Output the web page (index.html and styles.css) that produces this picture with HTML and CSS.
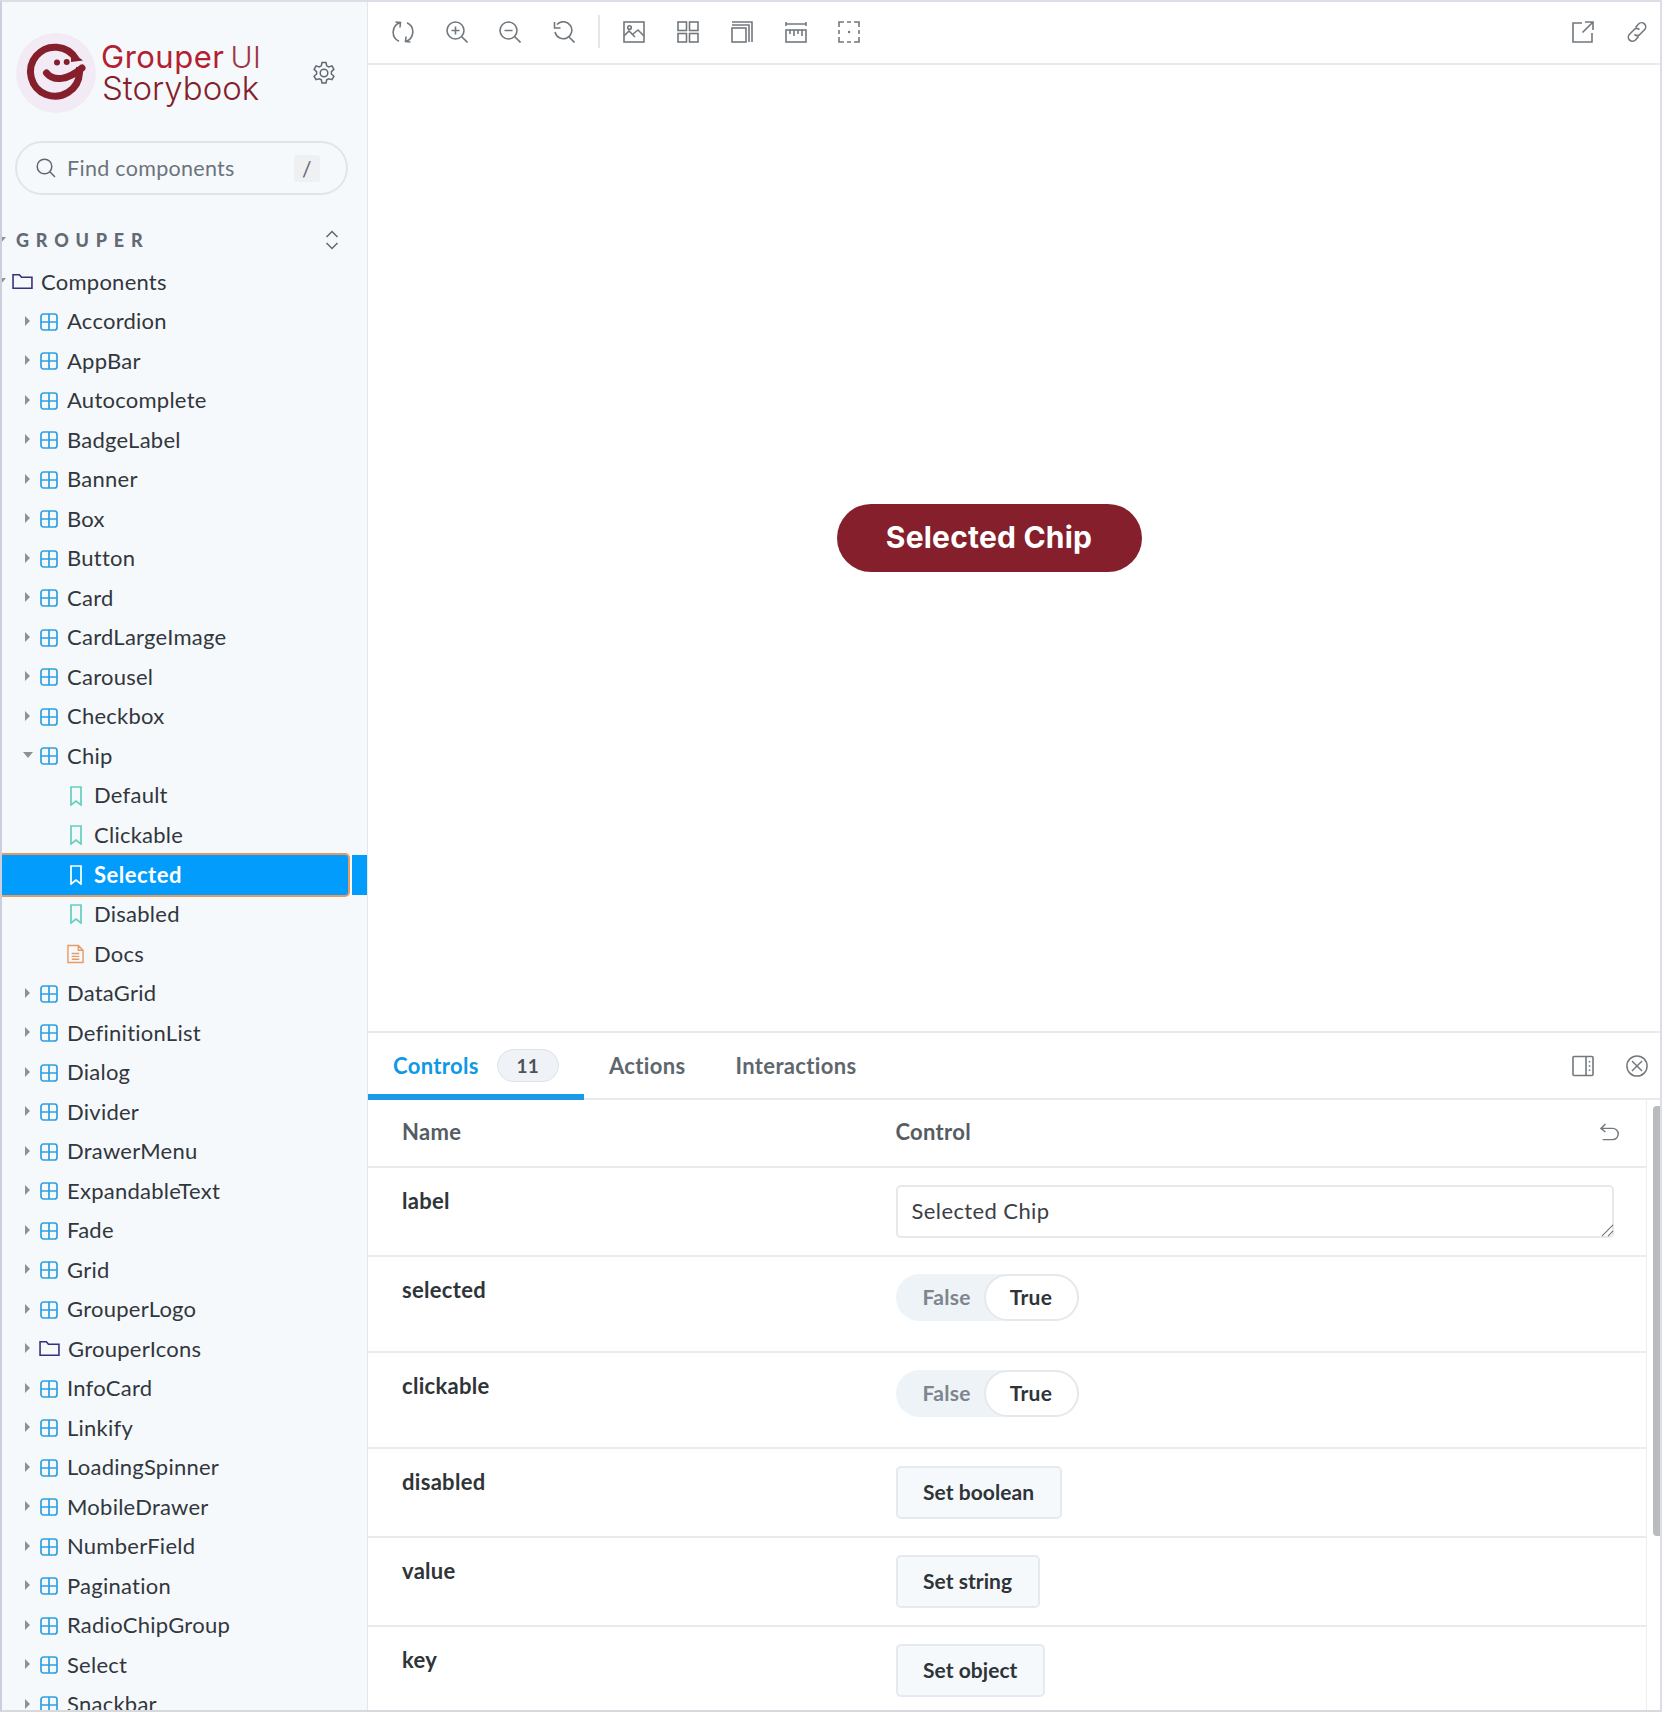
FILE: index.html
```html
<!DOCTYPE html>
<html lang="en">
<head>
<meta charset="utf-8">
<title>Grouper UI Storybook</title>
<link rel="stylesheet" href="styles.css">
</head>
<body>
<svg class="defs" width="0" height="0" aria-hidden="true">
  <symbol id="i-component" viewBox="0 0 18 18"><rect x="1" y="1" width="16" height="16" rx="2.5"/><path d="M9 1v16M1 9h16"/></symbol>
  <symbol id="i-folder" viewBox="0 0 20 16"><path d="M1 14.5V1.5h6l2 2.5h10v10.5z"/></symbol>
  <symbol id="i-bookmark" viewBox="0 0 12 20"><path d="M1 1h10v18l-5-4-5 4z"/></symbol>
  <symbol id="i-doc" viewBox="0 0 18 20"><path d="M1 1h11l5 5v13H1zM12 1v5h5M5 9.500h8M5 12.500h8M5 15.500h8"/></symbol>
  <symbol id="i-reload" viewBox="0 0 22 22"><path d="M8.500 1.500A10 10 0 0 0 7 20.200M13.500 20.500A10 10 0 0 0 15 1.800M3.500 1l5 .5-.5 5M18.500 21l-5-.5.5-5"/></symbol>
  <symbol id="i-zoomin" viewBox="0 0 22 22"><circle cx="9.500" cy="9.500" r="8.500"/><path d="m15.500 15.500 6 6M9.500 5.500v8M5.500 9.500h8"/></symbol>
  <symbol id="i-zoomout" viewBox="0 0 22 22"><circle cx="9.500" cy="9.500" r="8.500"/><path d="m15.500 15.500 6 6M5.500 9.500h8"/></symbol>
  <symbol id="i-zoomreset" viewBox="0 0 22 22"><path d="M4 3.500A8.500 8.500 0 1 1 2 11M1.500 1v6h6M15.500 15.500l6 6"/></symbol>
  <symbol id="i-photo" viewBox="0 0 22 22"><rect x="1" y="1" width="20" height="20"/><circle cx="6.500" cy="6.500" r="1.800"/><path d="m1 15 5-5 6 6M10 13l5-4 6 6"/></symbol>
  <symbol id="i-grid" viewBox="0 0 22 22"><rect x="1" y="1" width="8.500" height="8.500"/><rect x="12.500" y="1" width="8.500" height="8.500"/><rect x="1" y="12.500" width="8.500" height="8.500"/><rect x="12.500" y="12.500" width="8.500" height="8.500"/></symbol>
  <symbol id="i-outline" viewBox="0 0 22 22"><rect x="1" y="7" width="14" height="14"/><path d="M1 4h17v17M1 1h20v20"/></symbol>
  <symbol id="i-ruler" viewBox="0 0 22 22"><path d="M1 1v4M21 1v4M1 3h20"/><rect x="1" y="9" width="20" height="12"/><path d="M5 9v4M9 9v6M13 9v4M17 9v6"/></symbol>
  <symbol id="i-dashed" viewBox="0 0 22 22"><path d="M1 6V1h5M16 1h5v5M21 16v5h-5M6 21H1v-5M9 1h4M9 21h4M1 9v4M21 9v4" /><circle class="solid" cx="11" cy="11" r="1.200"/></symbol>
  <symbol id="i-share" viewBox="0 0 22 22"><path d="M10 2H1v19h19v-9M13 1h8v8M21 1 10.500 11.500"/></symbol>
  <symbol id="i-link" viewBox="0 0 22 22"><path d="m9.500 6.500 3-3.500a4 4 0 0 1 6 5.800l-4.500 4.500a4 4 0 0 1-5.500 0M12.500 15.500l-3 3.500a4 4 0 0 1-6-5.800L8 8.700a4 4 0 0 1 5.500 0"/></symbol>
  <symbol id="i-panel" viewBox="0 0 22 22"><rect x="1" y="1.500" width="20" height="19" rx="1"/><path d="M14 1.500v19M17.500 6v1.500M17.500 10.200v1.500M17.500 14.400v1.500"/></symbol>
  <symbol id="i-close" viewBox="0 0 24 24"><circle cx="12" cy="12" r="11"/><path d="m6.500 6.500 11 11M17.500 6.500l-11 11"/></symbol>
  <symbol id="i-undo" viewBox="0 0 22 20"><path d="M7 1 2 6l5 4M2 6h13a5.500 5.500 0 0 1 0 12.500H4"/></symbol>
  <symbol id="i-gear" viewBox="0 0 24 24"><circle cx="12" cy="12" r="3.800"/><path d="M10 1.500h4l.7 3.300 2 1.100 3.200-1 2 3.400-2.500 2.300v2.400l2.500 2.300-2 3.400-3.200-1-2 1.100-.7 3.300h-4l-.7-3.300-2-1.100-3.200 1-2-3.400 2.500-2.300v-2.400L2.100 8.300l2-3.400 3.200 1 2-1.100z"/></symbol>
  <symbol id="i-search" viewBox="0 0 20 20"><circle cx="8.500" cy="8.500" r="7.300"/><path d="m13.800 13.800 5.200 5.200"/></symbol>
  <symbol id="i-updown" viewBox="0 0 14 20"><path d="M1.500 7 7 1.500 12.500 7M1.500 13 7 18.500 12.500 13"/></symbol>
  <symbol id="i-resize" viewBox="0 0 14 14"><path d="M1 13 13 1M7.500 13 13 7.500"/></symbol>
</svg>

<div class="app">
  <aside class="sidebar">
    <header class="brand">
      <svg class="logo" viewBox="0 0 80 80" aria-hidden="true">
        <circle class="logo-bg" cx="40" cy="40" r="40"/>
        <path class="logo-g" d="M60 26A24.500 24.500 0 1 0 63.500 40V34"/>
        <path class="logo-eye" d="M55 18.500 67 27.500 55 29z"/>
        <path class="logo-smile" d="M30.500 40C38 49 52 47 66 35"/>
        <circle class="logo-eye" cx="41" cy="29.500" r="3"/>
        <circle class="logo-eye" cx="50.700" cy="29" r="3"/>
      </svg>
      <div class="wordmark">
        <div class="word-top">Grouper<span class="word-ui">UI</span></div>
        <div class="word-bottom">Storybook</div>
      </div>
      <svg class="ico gear"><use href="#i-gear"/></svg>
    </header>

    <div class="search">
      <svg class="ico search-ico"><use href="#i-search"/></svg>
      <span class="search-text">Find components</span>
      <kbd class="slash">/</kbd>
    </div>

    <div class="group-head">
      <span class="caret caret-down caret-cut"></span>
      <span class="group-title">GROUPER</span>
      <svg class="ico updown"><use href="#i-updown"/></svg>
    </div>

    <nav class="tree">
      <div class="row row-root"><span class="caret caret-down caret-cut"></span><svg class="ico folder"><use href="#i-folder"/></svg><span>Components</span></div>
      <div class="row"><span class="caret"></span><svg class="ico comp"><use href="#i-component"/></svg><span>Accordion</span></div>
      <div class="row"><span class="caret"></span><svg class="ico comp"><use href="#i-component"/></svg><span>AppBar</span></div>
      <div class="row"><span class="caret"></span><svg class="ico comp"><use href="#i-component"/></svg><span>Autocomplete</span></div>
      <div class="row"><span class="caret"></span><svg class="ico comp"><use href="#i-component"/></svg><span>BadgeLabel</span></div>
      <div class="row"><span class="caret"></span><svg class="ico comp"><use href="#i-component"/></svg><span>Banner</span></div>
      <div class="row"><span class="caret"></span><svg class="ico comp"><use href="#i-component"/></svg><span>Box</span></div>
      <div class="row"><span class="caret"></span><svg class="ico comp"><use href="#i-component"/></svg><span>Button</span></div>
      <div class="row"><span class="caret"></span><svg class="ico comp"><use href="#i-component"/></svg><span>Card</span></div>
      <div class="row"><span class="caret"></span><svg class="ico comp"><use href="#i-component"/></svg><span>CardLargeImage</span></div>
      <div class="row"><span class="caret"></span><svg class="ico comp"><use href="#i-component"/></svg><span>Carousel</span></div>
      <div class="row"><span class="caret"></span><svg class="ico comp"><use href="#i-component"/></svg><span>Checkbox</span></div>
      <div class="row"><span class="caret caret-down"></span><svg class="ico comp"><use href="#i-component"/></svg><span>Chip</span></div>
      <div class="row row-story"><svg class="ico story"><use href="#i-bookmark"/></svg><span>Default</span></div>
      <div class="row row-story"><svg class="ico story"><use href="#i-bookmark"/></svg><span>Clickable</span></div>
      <div class="row row-story row-selected"><svg class="ico story"><use href="#i-bookmark"/></svg><span>Selected</span></div>
      <div class="row row-story"><svg class="ico story"><use href="#i-bookmark"/></svg><span>Disabled</span></div>
      <div class="row row-doc"><svg class="ico doc"><use href="#i-doc"/></svg><span>Docs</span></div>
      <div class="row"><span class="caret"></span><svg class="ico comp"><use href="#i-component"/></svg><span>DataGrid</span></div>
      <div class="row"><span class="caret"></span><svg class="ico comp"><use href="#i-component"/></svg><span>DefinitionList</span></div>
      <div class="row"><span class="caret"></span><svg class="ico comp"><use href="#i-component"/></svg><span>Dialog</span></div>
      <div class="row"><span class="caret"></span><svg class="ico comp"><use href="#i-component"/></svg><span>Divider</span></div>
      <div class="row"><span class="caret"></span><svg class="ico comp"><use href="#i-component"/></svg><span>DrawerMenu</span></div>
      <div class="row"><span class="caret"></span><svg class="ico comp"><use href="#i-component"/></svg><span>ExpandableText</span></div>
      <div class="row"><span class="caret"></span><svg class="ico comp"><use href="#i-component"/></svg><span>Fade</span></div>
      <div class="row"><span class="caret"></span><svg class="ico comp"><use href="#i-component"/></svg><span>Grid</span></div>
      <div class="row"><span class="caret"></span><svg class="ico comp"><use href="#i-component"/></svg><span>GrouperLogo</span></div>
      <div class="row"><span class="caret"></span><svg class="ico folder folder-sub"><use href="#i-folder"/></svg><span>GrouperIcons</span></div>
      <div class="row"><span class="caret"></span><svg class="ico comp"><use href="#i-component"/></svg><span>InfoCard</span></div>
      <div class="row"><span class="caret"></span><svg class="ico comp"><use href="#i-component"/></svg><span>Linkify</span></div>
      <div class="row"><span class="caret"></span><svg class="ico comp"><use href="#i-component"/></svg><span>LoadingSpinner</span></div>
      <div class="row"><span class="caret"></span><svg class="ico comp"><use href="#i-component"/></svg><span>MobileDrawer</span></div>
      <div class="row"><span class="caret"></span><svg class="ico comp"><use href="#i-component"/></svg><span>NumberField</span></div>
      <div class="row"><span class="caret"></span><svg class="ico comp"><use href="#i-component"/></svg><span>Pagination</span></div>
      <div class="row"><span class="caret"></span><svg class="ico comp"><use href="#i-component"/></svg><span>RadioChipGroup</span></div>
      <div class="row"><span class="caret"></span><svg class="ico comp"><use href="#i-component"/></svg><span>Select</span></div>
      <div class="row"><span class="caret"></span><svg class="ico comp"><use href="#i-component"/></svg><span>Snackbar</span></div>
    </nav>
  </aside>

  <main class="main">
    <div class="toolbar">
      <div class="tool-group">
        <svg class="ico tool"><use href="#i-reload"/></svg>
        <svg class="ico tool"><use href="#i-zoomin"/></svg>
        <svg class="ico tool"><use href="#i-zoomout"/></svg>
        <svg class="ico tool"><use href="#i-zoomreset"/></svg>
        <span class="tool-divider"></span>
        <svg class="ico tool"><use href="#i-photo"/></svg>
        <svg class="ico tool"><use href="#i-grid"/></svg>
        <svg class="ico tool"><use href="#i-outline"/></svg>
        <svg class="ico tool"><use href="#i-ruler"/></svg>
        <svg class="ico tool"><use href="#i-dashed"/></svg>
      </div>
      <div class="tool-group">
        <svg class="ico tool"><use href="#i-share"/></svg>
        <svg class="ico tool"><use href="#i-link"/></svg>
      </div>
    </div>

    <section class="canvas">
      <span class="chip">Selected Chip</span>
    </section>

    <section class="panel">
      <div class="tabs">
        <div class="tab tab-active">Controls<span class="badge">11</span></div>
        <div class="tab">Actions</div>
        <div class="tab">Interactions</div>
        <div class="tab-actions">
          <svg class="ico tool"><use href="#i-panel"/></svg>
          <svg class="ico tool"><use href="#i-close"/></svg>
        </div>
      </div>

      <div class="controls">
        <div class="table">
          <div class="trow thead">
            <div class="cname">Name</div>
            <div class="ccontrol">Control</div>
            <svg class="ico tool undo"><use href="#i-undo"/></svg>
          </div>
          <div class="trow">
            <div class="cname strong">label</div>
            <div class="ccontrol field"><textarea class="textarea" rows="1">Selected Chip</textarea><svg class="ico resize"><use href="#i-resize"/></svg></div>
          </div>
          <div class="trow trow-toggle">
            <div class="cname strong">selected</div>
            <div class="ccontrol"><div class="toggle"><span class="t-off">False</span><span class="t-on">True</span></div></div>
          </div>
          <div class="trow trow-toggle">
            <div class="cname strong">clickable</div>
            <div class="ccontrol"><div class="toggle"><span class="t-off">False</span><span class="t-on">True</span></div></div>
          </div>
          <div class="trow">
            <div class="cname strong">disabled</div>
            <div class="ccontrol"><span class="setbtn">Set boolean</span></div>
          </div>
          <div class="trow">
            <div class="cname strong">value</div>
            <div class="ccontrol"><span class="setbtn">Set string</span></div>
          </div>
          <div class="trow">
            <div class="cname strong">key</div>
            <div class="ccontrol"><span class="setbtn">Set object</span></div>
          </div>
        </div>
        <div class="scrollbar"></div>
      </div>
    </section>
  </main>
</div>
</body>
</html>
```
FILE: styles.css
```css
* { box-sizing: border-box; }
html, body { margin: 0; padding: 0; }
body {
  width: 1662px;
  height: 1712px;
  overflow: hidden;
  background: #fff;
  font-family: "Lato", "Noto Sans", sans-serif;
  color: #2e3438;
}
.defs { position: absolute; }

.ico { fill: none; stroke: currentColor; stroke-width: 1.5; flex: none; display: block; }
.solid { fill: currentColor; stroke: none; }

.app {
  display: flex;
  height: 1712px;
  border-top: 2px solid #dcdde6;
  border-left: 2px solid #ccd0de;
  border-right: 2px solid #dcdde6;
  border-bottom: 2px solid #d8d9df;
  overflow: hidden;
}

/* Sidebar */
.sidebar {
  width: 366px;
  flex: none;
  background: #f6f9fc;
  border-right: 1px solid #e3e6ea;
  overflow: hidden;
}
.brand {
  display: flex;
  align-items: flex-start;
  height: 80px;
  margin-top: 31px;
  padding-left: 14px;
}
.logo { width: 80px; height: 80px; flex: none; }
.logo-bg { fill: #f2ebf5; }
.logo-g { fill: none; stroke: #841f2b; stroke-width: 7; }
.logo-smile { fill: none; stroke: #841f2b; stroke-width: 7; stroke-linecap: round; }
.logo-eye { fill: #841f2b; }
.wordmark { margin-left: 5px; width: 167px; padding-top: 7px; }
.word-top {
  font-family: "Inter", sans-serif;
  font-size: 31px;
  line-height: 34px;
  letter-spacing: 0.5px;
  white-space: nowrap;
  color: #b3202f;
}
.word-ui { margin-left: 6px; font-size: 30px; font-weight: 300; color: #a03545; letter-spacing: 0.500px; }
.word-bottom {
  font-family: "Inter", sans-serif;
  font-size: 33px;
  font-weight: 300;
  line-height: 29px;
  padding-left: 1px;
  letter-spacing: 0;
  color: #841f2b;
}
.gear { width: 24px; height: 24px; margin: 28px 0 0 44px; color: #5f6870; }

.search {
  display: flex;
  align-items: center;
  width: 333px;
  height: 54px;
  margin: 28px 0 0 13px;
  padding: 0 26px 0 19px;
  border: 2px solid #e1e5e9;
  border-radius: 27px;
  color: #6b747c;
  font-size: 21.500px;
  letter-spacing: 0.3px;
}
.search-ico { width: 20px; height: 20px; color: #5f6870; }
.search-text { margin-left: 11px; flex: 1; }
.slash {
  width: 26px;
  height: 27px;
  border-radius: 3px;
  background: #eef0f2;
  font: inherit;
  font-size: 21px;
  line-height: 27px;
  text-align: center;
  color: #5f6870;
}

.group-head {
  position: relative;
  display: flex;
  align-items: center;
  height: 40px;
  margin-top: 25px;
  padding: 0 28px 0 14px;
}
.group-title {
  flex: 1;
  font-size: 18px;
  font-weight: 900;
  letter-spacing: 6.800px;
  color: #626b73;
}
.updown { width: 14px; height: 20px; color: #5f6870; }

.tree { margin-top: 1.500px; }
.row {
  position: relative;
  display: flex;
  align-items: center;
  height: 39.520px;
  padding-left: 23px;
  font-size: 22px;
  letter-spacing: 0.25px;
  color: #31373c;
}
.caret {
  width: 0;
  height: 0;
  margin-right: 10px;
  border-left: 5px solid #8a9198;
  border-top: 5px solid transparent;
  border-bottom: 5px solid transparent;
}
.caret-down {
  width: 0;
  margin-right: 7px;
  margin-left: -2px;
  border-left: 5.500px solid transparent;
  border-right: 5.500px solid transparent;
  border-top: 6px solid #8a9198;
  border-bottom: 0;
}
.caret-cut { position: absolute; left: -6px; top: 50%; margin: -3px 0 0; }
.comp { width: 18px; height: 18px; margin: 2px 9px 0 0; color: #2f9fe0; stroke-width: 1.700; }
.folder { width: 21px; height: 17px; margin-right: 8px; color: #3a2f78; }
.folder-sub { margin-right: 8px; margin-left: -1px; }
.row-root { padding-left: 10px; }
.row-story { padding-left: 68px; }
.row-doc { padding-left: 65px; }
.story { width: 12px; height: 20px; margin: 2px 12px 0 0; color: #63d0bd; stroke-width: 1.700; }
.doc { width: 17px; height: 20px; margin: 2px 10px 0 0; color: #e89a62; }

.row-selected {
  width: 348px;
  height: 44px;
  margin: -1px 0 -3.500px;
  padding-bottom: 2px;
  background: #029cfd;
  color: #fff;
  font-weight: 700;
  letter-spacing: 0.5px;
  border: 2px solid #e8995f;
  border-left: 0;
  border-radius: 0 5px 5px 0;
}
.row-selected .story { color: #fff; }
.row-selected::after {
  content: "";
  position: absolute;
  left: 350px;
  top: 0;
  width: 17px;
  height: 40px;
  background: #029cfd;
}

/* Main */
.main { flex: 1; min-width: 0; display: flex; flex-direction: column; }
.toolbar {
  display: flex;
  align-items: center;
  justify-content: space-between;
  height: 63px;
  flex: none;
  padding: 0 12px 2px 24px;
  border-bottom: 2px solid #e8eaec;
}
.tool-group { display: flex; align-items: center; gap: 31.700px; }
.tool { width: 22px; height: 22px; color: #71787e; stroke-width: 1.600; }
.tool-divider { width: 2px; height: 33px; margin: 0 -8.500px 0 -8.500px; background: #e3e5e7; }

.canvas {
  flex: 1;
  display: flex;
  align-items: center;
  justify-content: center;
  padding: 0 50px 20px 0;
  background: #fff;
}
.chip {
  display: block;
  width: 305px;
  height: 68px;
  line-height: 66px;
  text-align: center;
  border-radius: 34px;
  background: #841f2b;
  color: #fff;
  font-family: "Inter", sans-serif;
  font-weight: 700;
  font-size: 30px;
  letter-spacing: 0.2px;
}

.panel { flex: none; height: 679px; display: flex; flex-direction: column; }
.tabs {
  display: flex;
  align-items: stretch;
  height: 69px;
  flex: none;
  border-top: 2px solid #e8eaec;
  border-bottom: 2px solid #e8eaec;
  font-size: 22px;
  letter-spacing: 0.35px;
  color: #5e676e;
  font-weight: 700;
}
.tab { display: flex; align-items: center; padding: 0 25px 2px; margin-bottom: -2px; }
.tab-active {
  width: 216px;
  padding: 4px 0 0 25px;
  color: #0f98e6;
  border-bottom: 6px solid #1b9ae8;
}
.badge {
  display: block;
  width: 62px;
  height: 33px;
  margin-left: 18px;
  border: 1px solid #dfe3e7;
  border-radius: 17px;
  background: #eff3f7;
  color: #4b5359;
  text-align: center;
  line-height: 31px;
  font-size: 19px;
}
.tab-actions {
  display: flex;
  align-items: center;
  gap: 32px;
  margin-left: auto;
  padding-right: 12px;
}

.controls { flex: 1; min-height: 0; display: flex; position: relative; overflow: hidden; }
.table { width: 1279px; flex: none; border-right: 1px solid #eceef0; }
.trow {
  display: flex;
  position: relative;
  height: 89px;
  padding: 17px 0 0 34px;
  border-bottom: 2px solid #e8ecef;
  font-size: 22px;
  letter-spacing: 0.3px;
}
.trow-toggle { height: 96px; }
.thead {
  height: 68px;
  padding-top: 0;
  padding-bottom: 4px;
  align-items: center;
  color: #555d63;
  font-weight: 700;
}
.thead .cname, .thead .ccontrol { line-height: normal; }
.cname { width: 493.500px; flex: none; line-height: 32px; }
.strong { font-weight: 700; color: #2e3438; }
.undo { width: 20px; height: 18px; position: absolute; right: 27px; top: 23px; }
.field { position: relative; align-self: flex-start; }
.textarea {
  display: block;
  width: 718px;
  height: 53px;
  padding: 11px 14px;
  border: 2px solid #e6e9ec;
  border-radius: 5px;
  background: #fff;
  color: #3a4046;
  font: inherit;
  font-size: 22px;
  letter-spacing: 0.4px;
  line-height: 26px;
  outline: none;
  resize: none;
}
.resize { position: absolute; right: 0; bottom: 1px; width: 13px; height: 13px; color: #6f767c; stroke-width: 1.200; }
.toggle {
  display: flex;
  align-items: center;
  width: 183px;
  height: 47px;
  border-radius: 24px;
  background: #eef3f8;
  font-weight: 700;
  font-size: 21px;
}
.t-off { flex: 1; padding: 0 0 2px 27px; color: #7e868d; }
.t-on {
  width: 95px;
  height: 47px;
  line-height: 41px;
  text-align: center;
  border: 2px solid #e6e9ec;
  border-radius: 24px;
  background: #fff;
  color: #2e3438;
}
.setbtn {
  display: inline-block;
  height: 53px;
  padding: 0 25.500px;
  line-height: 47px;
  border: 2px solid #e6eaee;
  border-radius: 5px;
  background: #f6f9fc;
  font-weight: 700;
  font-size: 21px;
  letter-spacing: 0.05px;
  color: #2e3438;
}
.scrollbar {
  position: absolute;
  right: 0;
  top: 6px;
  width: 7px;
  height: 430px;
  border-radius: 4px 0 0 4px;
  background: #b9bbbe;
}
```
